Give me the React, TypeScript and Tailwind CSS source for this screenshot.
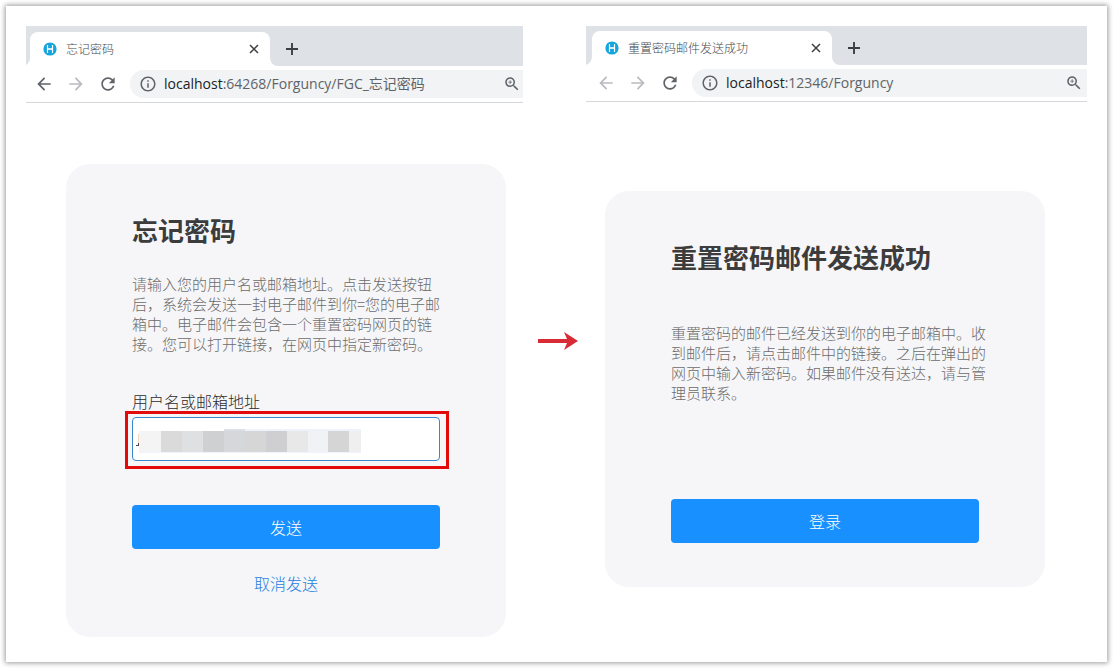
import type { ReactNode } from "react";

const ICONS = {
  back: "M20 11H7.83l5.59-5.59L12 4l-8 8 8 8 1.41-1.41L7.83 13H20v-2z",
  forward: "M12 4l-1.41 1.41L16.17 11H4v2h12.17l-5.58 5.59L12 20l8-8z",
  reload:
    "M17.65 6.35C16.2 4.9 14.21 4 12 4c-4.42 0-7.99 3.58-7.99 8s3.57 8 7.99 8c3.73 0 6.84-2.55 7.73-6h-2.08c-.82 2.33-3.04 4-5.65 4-3.31 0-6-2.69-6-6s2.69-6 6-6c1.66 0 3.14.69 4.22 1.78L13 11h7V4l-2.35 2.35z",
  info: "M11 7h2v2h-2zm0 4h2v6h-2zm1-9C6.48 2 2 6.48 2 12s4.48 10 10 10 10-4.48 10-10S17.52 2 12 2zm0 18c-4.41 0-8-3.59-8-8s3.59-8 8-8 8 3.59 8 8-3.59 8-8 8z",
  zoom: "M15.5 14h-.79l-.28-.27C15.41 12.59 16 11.11 16 9.5 16 5.91 13.09 3 9.5 3S3 5.91 3 9.5 5.91 16 9.5 16c1.61 0 3.09-.59 4.23-1.57l.27.28v.79l5 4.99L20.49 19l-4.99-5zm-6 0C7.01 14 5 11.99 5 9.5S7.01 5 9.5 5 14 7.01 14 9.5 11.99 14 9.5 14zM12 10h-2v2H9v-2H7V9h2V7h1v2h2v1z",
};

function Icon({ name, className }: { name: keyof typeof ICONS; className: string }) {
  return (
    <svg viewBox="0 0 24 24" fill="currentColor" className={className} aria-hidden="true">
      <path d={ICONS[name]} />
    </svg>
  );
}

function Favicon() {
  return (
    <svg viewBox="0 0 14 14" className="size-3.5 shrink-0" aria-hidden="true">
      <circle cx="7" cy="7" r="6.6" fill="#14a5dc" />
      <path d="M4.5 3v8M9.5 3v8" stroke="#fff" strokeWidth="1.2" />
      <path d="M5 7h4" stroke="#fff" strokeWidth="1.6" />
    </svg>
  );
}

type BrowserProps = {
  title: string;
  host: string;
  path: string;
  canGoBack: boolean;
  stripClass: string;
  toolbarClass: string;
  pillClass: string;
};

function BrowserBar({ title, host, path, canGoBack, stripClass, toolbarClass, pillClass }: BrowserProps) {
  return (
    <header>
      <div className={`flex items-end overflow-hidden bg-[#dee1e6] ${stripClass}`}>
        <div className="relative flex h-[34px] w-60 items-center rounded-t-lg bg-white pr-3 pl-[13px] text-xs text-[#45494d]">
          <svg viewBox="0 0 8 8" className="absolute bottom-0 -left-2 size-2" aria-hidden="true">
            <path d="M8 0v8H0a8 8 0 0 0 8-8z" fill="#fff" />
          </svg>
          <svg viewBox="0 0 8 8" className="absolute -right-2 bottom-0 size-2" aria-hidden="true">
            <path d="M0 0v8h8a8 8 0 0 1-8-8z" fill="#fff" />
          </svg>
          <Favicon />
          <span className="ml-[9px] grow font-light">{title}</span>
          <button type="button" aria-label="关闭标签页">
            <svg viewBox="0 0 8 8" className="size-2 overflow-visible" aria-hidden="true">
              <path d="M0 0l8 8M8 0L0 8" stroke="#3c4043" strokeWidth="1.5" />
            </svg>
          </button>
        </div>
        <button type="button" aria-label="新标签页" className="mb-[11px] ml-4">
          <svg viewBox="0 0 12 12" className="size-3" aria-hidden="true">
            <path d="M6 0v12M0 6h12" stroke="#3c4043" strokeWidth="1.9" />
          </svg>
        </button>
      </div>
      <div className={`flex items-center gap-3 border-b border-[#d5d7da] bg-white py-1 text-[#5f6368] ${toolbarClass}`}>
        <button type="button" aria-label="后退" className={canGoBack ? "text-[#5f6368]" : "text-[#b9bbbe]"}>
          <Icon name="back" className="size-5" />
        </button>
        <button type="button" aria-label="前进" className="text-[#b9bbbe]">
          <Icon name="forward" className="size-5" />
        </button>
        <button type="button" aria-label="重新加载">
          <Icon name="reload" className="size-5" />
        </button>
        <div className={`flex h-7 min-w-0 grow items-center rounded-l-full bg-[#f1f3f4] pl-[9px] ${pillClass}`}>
          <Icon name="info" className="size-[18px] shrink-0" />
          <span className="ml-[7px] grow truncate font-['Open_Sans','Noto_Sans_CJK_SC',sans-serif] text-sm">
            <span className="text-[#202124]">{host}</span>
            {path}
          </span>
          <button type="button" aria-label="缩放">
            <Icon name="zoom" className="size-[18px]" />
          </button>
        </div>
      </div>
    </header>
  );
}

function Card({ title, className, children }: { title: string; className: string; children: ReactNode }) {
  return (
    <section className={`w-full max-w-[440px] rounded-3xl bg-[#f6f6f8] px-[66px] pt-[46px] ${className}`}>
      <h1 className="text-[26px] leading-10 font-bold whitespace-nowrap text-[#3c3c3c]">{title}</h1>
      {children}
    </section>
  );
}

const MOSAIC = [
  "w-[22px] bg-[#f4f4f4]",
  "w-[21px] bg-[#dadada]",
  "w-[21px] bg-[#dfe0e2]",
  "w-[21px] bg-[#cfd0d2]",
  "w-[21px] bg-[#d6d7da] border-t-2 border-[#dcdfe8]",
  "w-[21px] bg-[#d6d6d6] border-t-2 border-[#edf2fb]",
  "w-[21px] bg-[#cfcfd2] border-t-2 border-[#edf2fb]",
  "w-[21px] bg-[#e8e8e8] border-t-2 border-[#edf2fb]",
  "w-5 bg-[#f1f2f5] border-t-2 border-[#edf2fb]",
  "w-[21px] bg-[#d5d5d5] border-t-2 border-[#edf2fb]",
  "w-3 bg-[#efefef] border-t-2 border-[#edf2fb]",
];

const PARAGRAPH = "-mr-2 text-[15px] leading-5 font-light whitespace-nowrap text-[#6c6c6c]";
const BUTTON = "block h-11 w-full rounded bg-[#1890ff] text-base font-light text-white";

export default function App() {
  return (
    <div className="flex min-h-screen bg-white p-1.5 font-['Noto_Sans_CJK_SC',sans-serif]">
      <main className="grid grow grid-cols-[497fr_63px_501fr] bg-white p-5 shadow-[0_0_5px_1px_rgba(0,0,0,0.4)]">
        <div>
          <BrowserBar
            title="忘记密码"
            host="localhost"
            path=":64268/Forguncy/FGC_忘记密码"
            canGoBack
            stripClass="h-10 pl-1"
            toolbarClass="pl-2"
            pillClass="pr-0.5"
          />
          <Card title="忘记密码" className="mt-[61px] ml-10 pb-[42px]">
            <p className={`mt-6 ${PARAGRAPH}`}>
              请输入您的用户名或邮箱地址。点击发送按钮
              <br />
              后，系统会发送一封电子邮件到你=您的电子邮
              <br />
              箱中。电子邮件会包含一个重置密码网页的链
              <br />
              接。您可以打开链接，在网页中指定新密码。
            </p>
            <form onSubmit={(event) => event.preventDefault()}>
              <label htmlFor="account" className="mt-[35px] block text-base leading-6 font-light text-[#2c2c2c]">
                用户名或邮箱地址
              </label>
              <div className="relative mt-1">
                <input
                  id="account"
                  type="text"
                  className="block h-11 w-full rounded border border-[#3b87cc] bg-white px-1 text-base outline-none"
                />
                <div className="pointer-events-none absolute top-3 left-1 flex items-end" aria-hidden="true">
                  <svg viewBox="0 0 3 24" className="h-6 w-[3px]">
                    <path d="M2 5h1v9H2z" fill="#f6d9bd" />
                    <path d="M2 14h1v3H0v-1h2z" fill="#4a4a55" />
                  </svg>
                  <div className="flex h-6 items-stretch border-b border-[#edf2fb]">
                    {MOSAIC.map((block, i) => (
                      <span key={i} className={i < 4 ? `mt-0.5 ${block}` : block} />
                    ))}
                  </div>
                </div>
                <div className="pointer-events-none absolute -top-1.5 -right-[9px] -bottom-2 -left-[7px] border-3 border-[#e20a0a]" />
              </div>
              <button type="submit" className={`mt-11 ${BUTTON}`}>
                发送
              </button>
            </form>
            <div className="mt-[22px] text-center leading-6">
              <a href="#cancel" className="text-base font-light text-[#1f80e0]">
                取消发送
              </a>
            </div>
          </Card>
        </div>

        <div className="flex justify-center pt-[305px] pl-1.5">
          <svg viewBox="0 0 40 20" className="h-5 w-10" aria-hidden="true">
            <path d="M0 8h29L26 1l14 9-14 9 3-7H0z" fill="#d92b35" />
          </svg>
        </div>

        <div>
          <BrowserBar
            title="重置密码邮件发送成功"
            host="localhost"
            path=":12346/Forguncy"
            canGoBack={false}
            stripClass="h-[39px] pl-1.5"
            toolbarClass="pl-2.5"
            pillClass="pr-1"
          />
          <Card title="重置密码邮件发送成功" className="mt-[89px] ml-[19px] pb-11">
            <p className={`mt-[46px] ${PARAGRAPH}`}>
              重置密码的邮件已经发送到你的电子邮箱中。收
              <br />
              到邮件后，请点击邮件中的链接。之后在弹出的
              <br />
              网页中输入新密码。如果邮件没有送达，请与管
              <br />
              理员联系。
            </p>
            <button type="button" className={`mt-24 ${BUTTON}`}>
              登录
            </button>
          </Card>
        </div>
      </main>
    </div>
  );
}
